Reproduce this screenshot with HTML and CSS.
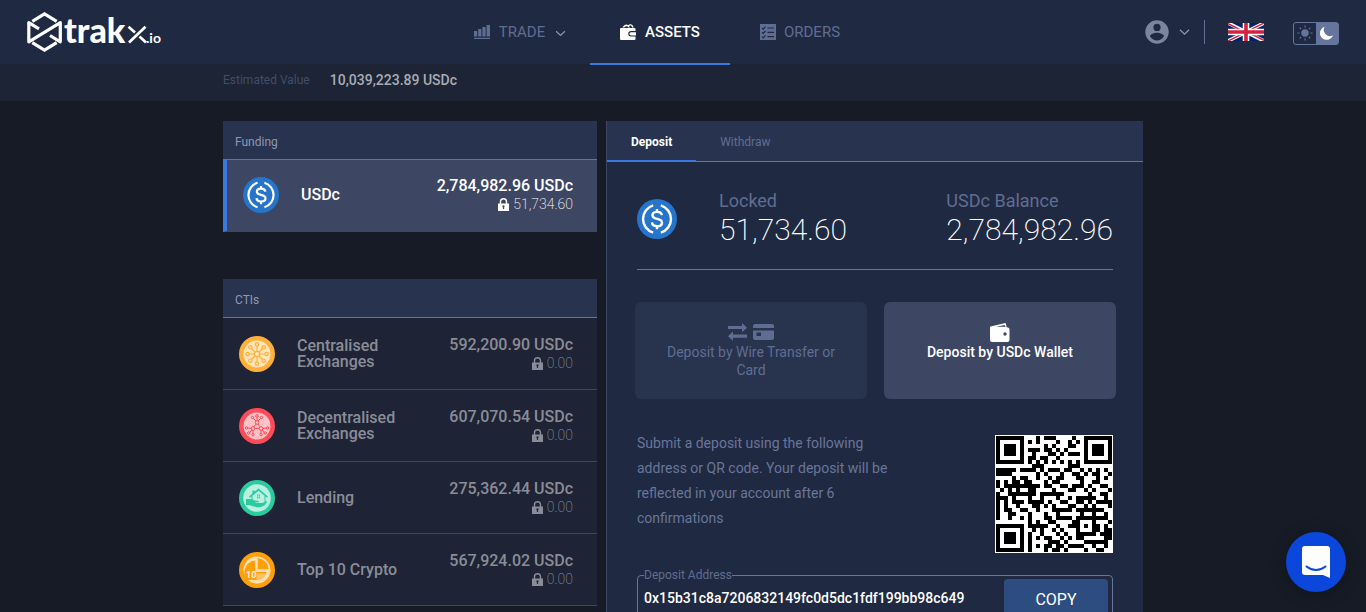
FILE: index.html
```html
<!DOCTYPE html>
<html lang="en">
<head>
<meta charset="utf-8">
<title>Trakx – Assets</title>
<meta name="viewport" content="width=device-width, initial-scale=1">
<link rel="stylesheet" href="styles.css">
</head>
<body>
<svg class="defs" aria-hidden="true">
  <symbol id="lock" viewBox="0 0 11 13">
    <path fill="currentColor" fill-rule="evenodd" d="M0 5.5h1.8V3.7a3.7 3.7 0 0 1 7.4 0v1.8H11V13H0zM3.2 5.5h4.6V3.8a2.3 2.3 0 0 0-4.6 0zM4.4 8.4a1.1 1.1 0 0 1 2.2 0c0 .4-.2.7-.5.9V11H4.9V9.300a1.100 1.100 0 0 1-.5-.9z"/>
  </symbol>
  <symbol id="usdc" viewBox="0 0 36 36">
    <circle cx="18" cy="18" r="18" fill="#2775ca"/>
    <g fill="none" stroke="#fff">
      <path stroke-width="2.200" d="M14.600 5.800a12.700 12.700 0 0 0 0 24.400M21.400 5.800a12.700 12.700 0 0 1 0 24.400"/>
      <path stroke-width="2.200" d="M22.300 14.600c-.2-2-1.800-3-4.200-3-2.500 0-4.200 1.200-4.200 3.100 0 2.100 1.900 2.700 4.200 3.200 2.500.5 4.400 1.100 4.400 3.400 0 2-1.800 3.200-4.400 3.200-2.700 0-4.400-1.200-4.600-3.400M18 9v3M18 24v3.200"/>
    </g>
  </symbol>
  <symbol id="chev" viewBox="0 0 12 8"><path d="M1 1.500l5 4.800 5-4.800" fill="none" stroke="currentColor" stroke-width="1.400"/></symbol>
</svg>

<header class="topbar">
  <a class="logo" href="#" aria-label="Trakx.io home">
    <svg width="136" height="44" viewBox="25 10 136 44">
      <g fill="none" stroke="#fff" stroke-width="3.200">
        <path d="M32.300 21.300L44.500 13.800L56.700 21.300M32.300 42.700L44.500 50.200L56.700 42.700"/>
        <path stroke-linejoin="round" d="M39 28.800L28.800 22.600V41.800L60.300 22.600V41.800L50 35.500"/>
        <path stroke-width="2.700" d="M129 42.500L145.500 26.800M128.500 26.800L135 32.600M139.500 36.500L146 42.500"/>
      </g>
      <text class="logo-word" x="64" y="43">trak</text>
      <text class="logo-tld" x="146" y="43">.io</text>
    </svg>
  </a>
  <nav class="nav">
    <a class="nav-item" href="#">
      <svg width="17" height="16" viewBox="0 0 17 16" fill="currentColor"><path d="M0 7h3.200v5.500H0zM4.200 5h3.200v7.500H4.200zM8.400 3h3.200v9.500H8.400zM12.600 1H16v11.500h-3.400zM0 13.800h16V15H0z"/></svg>
      <span>TRADE</span>
      <svg class="nav-caret" width="11" height="7"><use href="#chev"/></svg>
    </a>
    <a class="nav-item active" href="#" aria-current="page">
      <svg width="17" height="18" viewBox="0 0 17 18" fill="currentColor"><path d="M2.500 4.500C4 2 6.500.8 8 2.200 10 .3 13 1.200 13.500 4.500h-1.500c-.4-2-1.800-2.500-3-1.200L10 4.500H8.400C7.300 2.600 5.700 2.800 4.300 4.500z"/><path d="M1 5h13.500a1 1 0 0 1 1 1v2H11a2.700 2.700 0 0 0 0 5.500h4.500V16a1 1 0 0 1-1 1H1a1 1 0 0 1-1-1V6a1 1 0 0 1 1-1z"/><path d="M11 9.200h5v3.200h-5a1.600 1.600 0 0 1 0-3.200z"/></svg>
      <span>ASSETS</span>
    </a>
    <a class="nav-item" href="#">
      <svg width="16" height="16" viewBox="0 0 16 16"><path fill="currentColor" d="M0 0h16v16H0z"/><path fill="none" stroke="#1f2941" stroke-width="1.200" d="M2 4l1.200 1.200L5.500 2.600M2 8.300l1.200 1.200L5.500 7M2 12.600l1.200 1.200 2.300-2.500M7.500 4H14M7.500 8.300H14M7.500 12.600H14"/></svg>
      <span>ORDERS</span>
    </a>
  </nav>
  <div class="tools">
    <button class="account" aria-label="Account">
      <svg width="24" height="24" viewBox="0 0 24 24"><path fill="#7a869b" fill-rule="evenodd" d="M12 .3a11.700 11.700 0 1 1 0 23.400A11.700 11.700 0 0 1 12 .3zm0 3.500a3.600 3.600 0 1 0 0 7.200 3.600 3.600 0 0 0 0-7.200zM5 16.300c1.500 2.500 4 4.200 7 4.200s5.500-1.700 7-4.200c0-2.300-4.700-3.600-7-3.600s-7 1.300-7 3.600z"/></svg>
      <svg width="11" height="8"><use href="#chev"/></svg>
    </button>
    <button class="flag" aria-label="English">
      <svg width="36" height="18" viewBox="0 0 60 30"><path fill="#012169" d="M0 0h60v30H0z"/><path stroke="#fff" stroke-width="6" d="M0 0l60 30M60 0L0 30"/><path stroke="#d4213d" stroke-width="2.500" d="M0 1l28 14M60 0L32 14M0 30l28-14M60 29L32 15"/><path stroke="#fff" stroke-width="11" d="M30 0v30M0 15h60"/><path stroke="#d4213d" stroke-width="6" d="M30 0v30M0 15h60"/></svg>
    </button>
    <button class="theme" aria-label="Toggle dark theme">
      <span class="theme-half"><svg width="16" height="16" viewBox="0 0 16 16"><circle cx="8" cy="8" r="3.700" fill="#66759b"/><path stroke="#66759b" stroke-width="1.200" d="M8 .5v2M8 13.500v2M.5 8h2M13.500 8h2M2.700 2.700l1.400 1.400M11.900 11.900l1.400 1.400M13.300 2.700l-1.400 1.400M4.100 11.900l-1.400 1.400"/></svg></span>
      <span class="theme-half on"><svg width="14" height="14" viewBox="0 0 14 14"><path fill="#fff" d="M4.500.8A6.700 6.700 0 1 0 13 9.300 6.300 6.300 0 0 1 4.500.8z"/></svg></span>
    </button>
  </div>
</header>

<div class="page">
  <section class="summary">
    <div class="wrap"><span class="summary-label">Estimated Value</span><strong>10,039,223.89 USDc</strong></div>
  </section>

  <main class="wrap columns">
    <div class="lists">
      <section class="list">
        <h2>Funding</h2>
        <a class="row selected" href="#">
          <svg class="coin" width="36" height="36"><use href="#usdc"/></svg>
          <span class="name">USDc</span>
          <span class="amounts"><b>2,784,982.96 USDc</b><small><svg width="11" height="13"><use href="#lock"/></svg>51,734.60</small></span>
        </a>
      </section>
      <section class="list">
        <h2>CTIs</h2>
        <a class="row" href="#">
          <svg class="coin" width="36" height="36" viewBox="-18 -18 36 36">
            <circle r="18" fill="#ffb03b"/><circle r="13.500" fill="#ffe5b8"/>
            <g fill="#ffe5b8" stroke="#ffb03b" stroke-width="1.200">
              <path d="M0-8V8M-8 0H8M-6-6L6 6M-6 6L6-6"/><circle r="2.600"/>
              <circle cy="-9.500" r="1.700"/><circle cy="9.500" r="1.700"/><circle cx="-9.500" r="1.700"/><circle cx="9.500" r="1.700"/>
              <circle cx="-6.700" cy="-6.700" r="1.700"/><circle cx="6.700" cy="-6.700" r="1.700"/><circle cx="-6.700" cy="6.700" r="1.700"/><circle cx="6.700" cy="6.700" r="1.700"/>
            </g>
          </svg>
          <span class="name">Centralised Exchanges</span>
          <span class="amounts"><b>592,200.90 USDc</b><small><svg width="11" height="13"><use href="#lock"/></svg>0.00</small></span>
        </a>
        <a class="row" href="#">
          <svg class="coin" width="36" height="36" viewBox="-18 -18 36 36">
            <circle r="18" fill="#ff4a57"/><circle r="13.500" fill="#ffc2c6"/>
            <g fill="#ffc2c6" stroke="#ff4a57" stroke-width="1">
              <path d="M0-3.500V-9M0-4l-4-4M0-4l4-4M0-3L-4 2M0-3L4 2M-4 2.500h8M-4 2.500l-6-.5M-4 2.500l-4 5M-4 2.500v6M4 2.500l6-.5M4 2.500l4 5M4 2.500v6"/>
              <circle cy="-3.500" r="1.800"/><circle cx="-4" cy="2.500" r="1.800"/><circle cx="4" cy="2.500" r="1.800"/>
              <circle cy="-10" r="1.300"/><circle cx="-4.500" cy="-8.500" r="1.200"/><circle cx="4.500" cy="-8.500" r="1.200"/>
              <circle cx="-10.500" cy="2" r="1.200"/><circle cx="-8.300" cy="7" r="1.200"/><circle cx="-4" cy="8.700" r="1.200"/>
              <circle cx="10.500" cy="2" r="1.200"/><circle cx="8.300" cy="7" r="1.200"/><circle cx="4" cy="8.700" r="1.200"/>
            </g>
          </svg>
          <span class="name">Decentralised Exchanges</span>
          <span class="amounts"><b>607,070.54 USDc</b><small><svg width="11" height="13"><use href="#lock"/></svg>0.00</small></span>
        </a>
        <a class="row" href="#">
          <svg class="coin" width="36" height="36" viewBox="-18 -18 36 36">
            <circle r="18" fill="#29cc9f"/><circle r="13.800" fill="#baf0e0"/>
            <g fill="#29cc9f">
              <path d="M-8-1.500L1.500-9.500 11-1.500 10-.3 1.500-7.200-7-.3z"/><path d="M-4.500-7.500h2.200v2l-2.200 2z"/>
              <path d="M-5.500-2h1v4h-1zM7.500-2h1v6h-1zM0-3.500h1.200v1.300H0zM1.800-3.500H3v1.300H1.800zM0-1.500h1.200V.3H0zM1.800-1.500H3V.3H1.800z"/>
              <path d="M-11 1h4c3 0 3.500 1.700 6 1.700 2 0 3 .3 3 1.500H-1.500v.8H4c2.500 0 4-2 6.500-1.800C9 6.500 6 9 2 9.300-3 9.500-4 7.300-11 7z"/>
            </g>
          </svg>
          <span class="name">Lending</span>
          <span class="amounts"><b>275,362.44 USDc</b><small><svg width="11" height="13"><use href="#lock"/></svg>0.00</small></span>
        </a>
        <a class="row" href="#">
          <svg class="coin" width="36" height="36" viewBox="-18 -18 36 36">
            <circle r="18" fill="#ff9f0a"/>
            <circle r="13.500" fill="#ffe0b0"/>
            <path fill="#ff9f0a" d="M.8-11.800A11.800 11.800 0 0 1 11.800-.8H.8z"/>
            <path fill="#ff9f0a" d="M-1.800-9.500V2H9.500A10.500 10.500 0 0 1 2 10H-13L-12.500 0A11.500 11.500 0 0 1-1.800-9.500z"/>
            <path fill="#ffe0b0" d="M-.5 3.500H9A9.500 9.500 0 0 1-.5 11.500z" opacity=".5"/>
            <text class="coin-ten" x="-11" y="8">10</text>
          </svg>
          <span class="name">Top 10 Crypto</span>
          <span class="amounts"><b>567,924.02 USDc</b><small><svg width="11" height="13"><use href="#lock"/></svg>0.00</small></span>
        </a>
      </section>
    </div>

    <section class="funds">
      <div class="tabs" role="tablist">
        <button class="tab active" role="tab" aria-selected="true">Deposit</button>
        <button class="tab" role="tab" aria-selected="false">Withdraw</button>
      </div>
      <div class="funds-body">
        <div class="balances">
          <svg class="coin" width="40" height="40"><use href="#usdc"/></svg>
          <div class="balance"><span>Locked</span><strong>51,734.60</strong></div>
          <div class="balance last"><span>USDc Balance</span><strong>2,784,982.96</strong></div>
        </div>
        <div class="methods">
          <button class="method">
            <span class="method-icons">
              <svg width="19" height="18" viewBox="0 0 19 18" fill="currentColor"><path d="M0 3h14V0l5 4.700-5 4.500V6H0zM19 11.500H5V8.500L0 13.200l5 4.600v-3h14z"/></svg>
              <svg width="21" height="16" viewBox="0 0 21 16" fill="currentColor"><path fill-rule="evenodd" d="M2 0h17a2 2 0 0 1 2 2v2H0V2a2 2 0 0 1 2-2zM0 6.500h21V14a2 2 0 0 1-2 2H2a2 2 0 0 1-2-2zM3.500 8.500v3.500h4.500V8.500z"/></svg>
            </span>
            Deposit by Wire Transfer or Card
          </button>
          <button class="method active">
            <span class="method-icons">
              <svg width="20" height="19" viewBox="0 0 20 19" fill="currentColor"><path d="M.5 3.500L15.500 0l1.200 3.700-1.500-.2-.5-1.500L6 3.800h9l3 .7a2 2 0 0 1 1.500 2V17a2 2 0 0 1-2 2H2a2 2 0 0 1-2-2V5a2 2 0 0 1 .5-1.500z"/><circle cx="15" cy="11" r="1.700" fill="#3d4663"/></svg>
            </span>
            Deposit by USDc Wallet
          </button>
        </div>
        <div class="instructions">
          <p>Submit a deposit using the following address or QR code. Your deposit will be reflected in your account after 6 confirmations</p>
          <svg id="qr" class="qr" width="118" height="118" viewBox="0 0 118 118" role="img" aria-label="Deposit address QR code"></svg>
        </div>
        <fieldset class="address">
          <legend><label for="address">Deposit Address</label></legend>
          <input id="address" type="text" readonly value="0x15b31c8a7206832149fc0d5dc1fdf199bb98c649">
          <button class="copy">COPY</button>
        </fieldset>
      </div>
    </section>
  </main>
</div>

<button class="chat" aria-label="Open chat">
  <svg width="28" height="32" viewBox="0 0 28 32"><path fill="#fff" d="M3 0h22a3 3 0 0 1 3 3v29l-7-3H3a3 3 0 0 1-3-3V3a3 3 0 0 1 3-3z"/><path d="M4.500 20.500c5.500 4.500 13.500 4.500 19 0" fill="none" stroke="#0b47db" stroke-width="2" stroke-linecap="round"/></svg>
</button>
<script src="qr.js"></script>
</body>
</html>
```
FILE: styles.css
```css
* { box-sizing: border-box; }
body {
  margin: 0;
  height: 100vh;
  display: flex;
  flex-direction: column;
  overflow: hidden;
  background: #161b26;
  color: #fff;
  font-family: Roboto, "Liberation Sans", sans-serif;
  font-size: 14px;
}
button, input { font: inherit; color: inherit; background: none; border: 0; padding: 0; }
button { cursor: pointer; }
a { color: inherit; text-decoration: none; }
svg { display: block; flex: none; }
.defs { position: absolute; width: 0; height: 0; }

.topbar {
  flex: none;
  position: relative;
  z-index: 1;
  height: 64px;
  display: grid;
  grid-template: 64px / 1fr auto 1fr;
  background: #1f2941;
  padding: 0 27px 0 25px;
}
.logo { align-self: center; width: 136px; }
.logo-word { font: 900 34px Lato, sans-serif; fill: #fff; }
.logo-tld { font: 700 14px Lato, sans-serif; fill: #fff; }
.nav { display: flex; margin-right: 44px; }
.nav-item {
  width: 140px;
  height: 65px;
  display: flex;
  align-items: center;
  justify-content: center;
  gap: 8px;
  color: #606d92;
  font-size: 15px;
  border-bottom: 2px solid transparent;
}
.nav-item.active { color: #fff; font-weight: 500; border-color: #3b78e0; }
.nav-caret { margin: 4px 0 0 2px; color: #8a97b8; }
.tools { display: flex; align-items: center; justify-content: flex-end; }
.account {
  display: flex;
  align-items: center;
  gap: 10px;
  height: 24px;
  padding-right: 14px;
  border-right: 1px solid #5f7097;
  color: #8a97b8;
}
.flag { margin: 0 29px 0 23px; }
.theme {
  display: flex;
  width: 46px;
  height: 23px;
  margin-top: 2px;
  border: 1px solid #66759b;
  border-radius: 3px;
}
.theme-half { flex: 1; height: 100%; display: grid; place-items: center; }
.theme-half.on { background: #66759b; }

.page { flex: 1; min-height: 0; overflow: auto; scrollbar-width: none; }
.wrap { width: 100%; max-width: 920px; margin: 0 auto; }
.summary { background: #1c2435; padding: 8px 0 13px; line-height: 16px; }
.summary .wrap { display: flex; gap: 20px; }
.summary-label { font-size: 12px; color: #414d6b; }
.summary strong { font-weight: 500; color: #a9acb4; }

.columns { display: grid; grid-template-columns: 374fr 537fr; gap: 9px; padding-top: 20px; }
.lists { display: flex; flex-direction: column; gap: 47px; }
.list h2 {
  margin: 0;
  padding: 13px 12px 9px;
  background: #28334f;
  border-bottom: 1px solid #66759b;
  color: #8d98b5;
  font-size: 12px;
  font-weight: 400;
  line-height: 16px;
}
.row {
  display: flex;
  align-items: center;
  min-height: 72px;
  padding: 0 24px 0 16px;
  background: #1e2335;
  border-bottom: 1px solid #3d4663;
  color: #8a8d97;
}
.row.selected { background: #3d4663; border-left: 4px solid #3b78e0; color: #fff; padding-bottom: 2px; }
.name { flex: 1; max-width: 130px; margin-left: 22px; font-size: 16px; font-weight: 500; line-height: 16px; }
.amounts { margin-left: auto; text-align: right; }
.amounts b { display: block; font-size: 16px; font-weight: 500; line-height: 19px; }
.amounts small {
  display: flex;
  align-items: center;
  justify-content: flex-end;
  gap: 4px;
  font-size: 14px;
  font-weight: 200;
  line-height: 18px;
}
.coin-ten { font: 700 9px Roboto, sans-serif; fill: #fff0d8; }

.funds { background: #1f2941; border-left: 1px solid #3d4663; }
.tabs { display: flex; background: #28334f; border-bottom: 1px solid #66759b; }
.tab {
  height: 41px;
  margin-bottom: -1px;
  padding: 2px 24px 0;
  border-bottom: 2px solid transparent;
  font-size: 12px;
  color: #606d92;
}
.tab.active { color: #fff; font-weight: 700; border-color: #3b78e0; }
.funds-body { padding: 28px 30px 0; }
.balances {
  display: flex;
  align-items: center;
  padding-bottom: 21px;
  border-bottom: 1px solid #66759b;
}
.balance { display: flex; flex-direction: column; margin-left: 42px; }
.balance.last { margin-left: auto; }
.balance span { font-size: 18px; line-height: 22px; color: #606d92; }
.balance strong { font-size: 30px; font-weight: 200; line-height: 36px; text-align: right; }
.methods { display: grid; grid-template-columns: 1fr 1fr; gap: 17px; margin: 32px -3px 0 -2px; }
.method {
  min-height: 97px;
  padding: 20px 24px;
  display: flex;
  flex-direction: column;
  align-items: center;
  border-radius: 6px;
  background: #28334d;
  color: #606d92;
  line-height: 18px;
}
.method.active { background: #3d4663; color: #fff; font-weight: 500; }
.method-icons { display: flex; align-items: center; gap: 6px; height: 20px; margin-bottom: 1px; }
.instructions { display: flex; justify-content: space-between; padding-top: 36px; }
.instructions p { margin: -4px 0 0; max-width: 260px; line-height: 25px; color: #69769a; }
.address {
  display: flex;
  align-items: center;
  margin: 15px 0 30px;
  padding: 0 4px 4px 6px;
  border: 1px solid #66759b;
  border-radius: 4px;
  min-width: 0;
}
.address legend { padding: 0; font-size: 12px; line-height: 14px; color: #606d92; }
.address input { flex: 1; min-width: 0; margin-top: -5px; font-weight: 500; outline: 0; }
.copy {
  width: 104px;
  height: 40px;
  margin-top: -3px;
  border-radius: 4px;
  background: #2d4d80;
  font-size: 16px;
}
.chat {
  position: fixed;
  right: 20px;
  bottom: 20px;
  width: 60px;
  height: 60px;
  display: grid;
  place-items: center;
  border-radius: 50%;
  background: #0b47db;
  box-shadow: 0 2px 16px rgba(0, 0, 0, .3);
}
```
FILE: qr.js
```js
// Version 3 QR encoder (29 x 29 modules, byte mode, single block).
(function () {
  var SIZE = 29;
  var LEVELS = { L: { data: 55, ec: 15, bits: 1 }, M: { data: 44, ec: 26, bits: 0 } };
  var MASKS = [
    function (r, c) { return (r + c) % 2 === 0; },
    function (r) { return r % 2 === 0; },
    function (r, c) { return c % 3 === 0; },
    function (r, c) { return (r + c) % 3 === 0; },
    function (r, c) { return (Math.floor(r / 2) + Math.floor(c / 3)) % 2 === 0; },
    function (r, c) { return (r * c) % 2 + (r * c) % 3 === 0; },
    function (r, c) { return ((r * c) % 2 + (r * c) % 3) % 2 === 0; },
    function (r, c) { return ((r + c) % 2 + (r * c) % 3) % 2 === 0; }
  ];

  function mul(a, b) {
    var z = 0;
    for (var i = 7; i >= 0; i--) {
      z = (z << 1) ^ ((z >>> 7) * 0x11d);
      z ^= ((b >>> i) & 1) * a;
    }
    return z;
  }

  function codewords(text, level) {
    var bits = [], out = [], i, j;
    function push(v, n) { for (var k = n - 1; k >= 0; k--) bits.push((v >> k) & 1); }
    push(4, 4);
    push(text.length, 8);
    for (i = 0; i < text.length; i++) push(text.charCodeAt(i), 8);
    for (i = 0; i < 4 && bits.length < level.data * 8; i++) bits.push(0);
    while (bits.length % 8) bits.push(0);
    for (i = 0; i < bits.length; i += 8) out.push(parseInt(bits.slice(i, i + 8).join(""), 2));
    for (i = 0; out.length < level.data; i++) out.push(i % 2 ? 0x11 : 0xec);

    var gen = [], root = 1;
    for (i = 0; i < level.ec; i++) gen.push(0);
    gen[level.ec - 1] = 1;
    for (i = 0; i < level.ec; i++) {
      for (j = 0; j < level.ec; j++) {
        gen[j] = mul(gen[j], root);
        if (j + 1 < level.ec) gen[j] ^= gen[j + 1];
      }
      root = mul(root, 2);
    }
    var rem = gen.map(function () { return 0; });
    out.forEach(function (b) {
      var f = b ^ rem.shift();
      rem.push(0);
      gen.forEach(function (g, k) { rem[k] ^= mul(g, f); });
    });
    return out.concat(rem);
  }

  function build(text, level, mask, test) {
    var m = [], fixed = [], r, c, i;
    for (r = 0; r < SIZE; r++) { m.push(new Array(SIZE).fill(0)); fixed.push(new Array(SIZE).fill(0)); }
    function set(y, x, v) { if (y >= 0 && x >= 0 && y < SIZE && x < SIZE) { m[y][x] = v ? 1 : 0; fixed[y][x] = 1; } }
    for (i = 0; i < SIZE; i++) { set(6, i, i % 2 === 0); set(i, 6, i % 2 === 0); }
    [[3, 3], [3, SIZE - 4], [SIZE - 4, 3]].forEach(function (p) {
      for (var a = -4; a <= 4; a++) for (var b = -4; b <= 4; b++) {
        var d = Math.max(Math.abs(a), Math.abs(b));
        set(p[0] + a, p[1] + b, d !== 2 && d !== 4);
      }
    });
    for (r = -2; r <= 2; r++) for (c = -2; c <= 2; c++) set(22 + r, 22 + c, Math.max(Math.abs(r), Math.abs(c)) !== 1);

    var data = level.bits << 3 | mask, rem = data;
    for (i = 0; i < 10; i++) rem = (rem << 1) ^ ((rem >>> 9) * 0x537);
    var f = (data << 10 | rem) ^ 0x5412;
    function bit(k) { return test ? 0 : (f >>> k) & 1; }
    for (i = 0; i <= 5; i++) set(i, 8, bit(i));
    set(7, 8, bit(6)); set(8, 8, bit(7)); set(8, 7, bit(8));
    for (i = 9; i < 15; i++) set(8, 14 - i, bit(i));
    for (i = 0; i < 8; i++) set(8, SIZE - 1 - i, bit(i));
    for (i = 8; i < 15; i++) set(SIZE - 15 + i, 8, bit(i));
    set(SIZE - 8, 8, !test);

    var words = codewords(text, level), n = 0;
    for (var right = SIZE - 1; right >= 1; right -= 2) {
      if (right === 6) right = 5;
      for (var v = 0; v < SIZE; v++) for (var j = 0; j < 2; j++) {
        var x = right - j, y = ((right + 1) & 2) === 0 ? SIZE - 1 - v : v;
        if (fixed[y][x]) continue;
        var on = n < words.length * 8 ? (words[n >> 3] >> (7 - (n & 7))) & 1 : 0;
        n++;
        m[y][x] = on ^ (MASKS[mask](y, x) ? 1 : 0);
      }
    }
    return m;
  }

  // Score of a masked symbol: crowded neighbours, 2x2 blocks, finder look-alikes, balance.
  function penalty(m) {
    var total = 0, dark = 0, r, c, a, b;
    for (r = 0; r < SIZE; r++) for (c = 0; c < SIZE; c++) {
      var same = 0;
      for (a = -1; a <= 1; a++) for (b = -1; b <= 1; b++) {
        if ((a || b) && m[r + a] && m[r + a][c + b] === m[r][c]) same++;
      }
      if (same > 5) total += same - 2;
      dark += m[r][c];
      if (r && c) {
        var sum = m[r][c] + m[r - 1][c] + m[r][c - 1] + m[r - 1][c - 1];
        if (sum === 0 || sum === 4) total += 3;
      }
      var across = "", down = "";
      for (a = 0; a < 7; a++) {
        across += m[r][c + a];
        down += m[r + a] ? m[r + a][c] : "";
      }
      if (across === "1011101") total += 40;
      if (down === "1011101") total += 40;
    }
    return total + Math.abs(100 * dark / (SIZE * SIZE) - 50) / 5 * 10;
  }

  function draw(svg, text, level) {
    var best = 0, low = Infinity;
    for (var k = 0; k < 8; k++) {
      var p = penalty(build(text, level, k, true));
      if (p < low) { low = p; best = k; }
    }
    var d = "";
    build(text, level, best, false).forEach(function (row, y) {
      row.forEach(function (on, x) { if (on) d += "M" + (1 + x * 4) + " " + (1 + y * 4) + "h4v4h-4z"; });
    });
    svg.innerHTML = '<path fill="#fff" d="M0 0h118v118H0z"/><path fill="#000" shape-rendering="crispEdges" d="' + d + '"/>';
  }

  draw(document.getElementById("qr"), document.getElementById("address").value, LEVELS.L);
})();
```
